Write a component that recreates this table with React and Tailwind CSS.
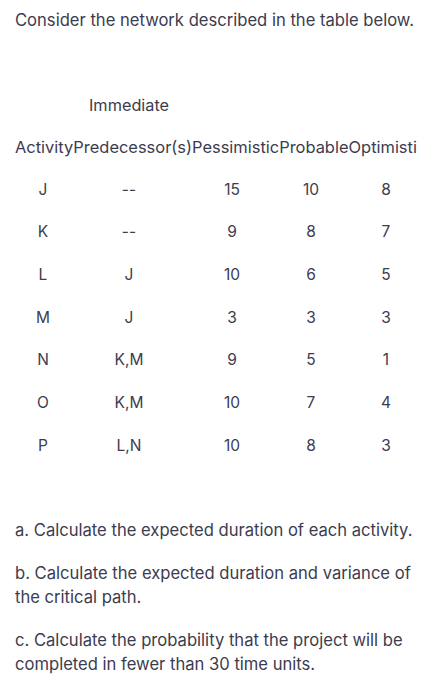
export default function App() {
  const rows = [
    ["J", "--", "15", "10", "8"],
    ["K", "--", "9", "8", "7"],
    ["L", "J", "10", "6", "5"],
    ["M", "J", "3", "3", "3"],
    ["N", "K,M", "9", "5", "1"],
    ["O", "K,M", "10", "7", "4"],
    ["P", "L,N", "10", "8", "3"],
  ];
  return (
    <div
      className="w-[446px] h-[700px] bg-white text-[#3c3c4f] overflow-hidden"
      style={{ fontFamily: 'Inter, "Liberation Sans", Arial, sans-serif' }}
    >
      <p className="pl-[15px] pt-[8px] text-[16.6px] leading-6">
        Consider the network described in the table below.
      </p>
      <p className="pl-[89px] mt-[61px] text-[16.3px] leading-6">Immediate</p>
      <p className="pl-[15px] mt-[18px] text-[16.45px] leading-6 whitespace-nowrap">
        ActivityPredecessor(s)PessimisticProbableOptimisti
      </p>
      <div className="mt-[9px] flex flex-col text-[15.5px]">
        {rows.map((r) => (
          <div key={r[0]} className="flex h-[42.67px] items-center leading-none">
            <div className="w-[86px] text-center">{r[0]}</div>
            <div className="w-[86px] text-center">{r[1]}</div>
            <div className="w-[120px] text-center">{r[2]}</div>
            <div className="w-[38px] text-center">{r[3]}</div>
            <div className="w-[112px] text-center">{r[4]}</div>
          </div>
        ))}
      </div>
      <div className="pl-[15px] pr-[20px] mt-[51px] flex flex-col gap-[19px] text-[16.6px] leading-6">
        <p>a. Calculate the expected duration of each activity.</p>
        <p>b. Calculate the expected duration and variance of the critical path.</p>
        <p>c. Calculate the probability that the project will be completed in fewer than 30 time units.</p>
      </div>
    </div>
  );
}
